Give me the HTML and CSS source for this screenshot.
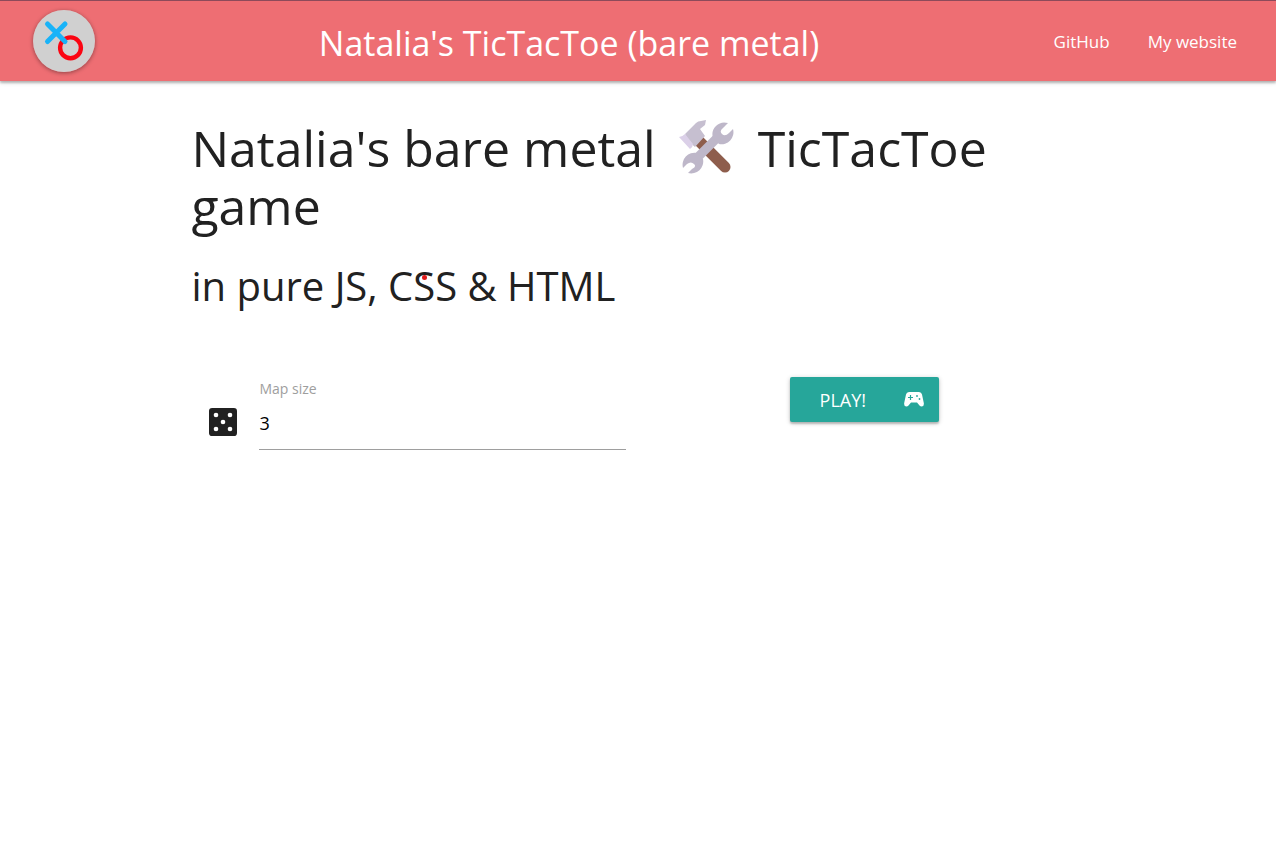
FILE: index.html
```html
<!DOCTYPE html>
<html lang="en">
<head>
<meta charset="utf-8">
<meta name="viewport" content="width=device-width, initial-scale=1">
<title>Natalia's TicTacToe (bare metal)</title>
<link rel="stylesheet" href="styles.css">
</head>
<body>
<header class="navbar">
  <a class="logo" href="#" aria-label="Home">
    <svg viewBox="0 0 62 62" aria-hidden="true">
      <circle cx="31" cy="31" r="31" fill="#d0d0d0"/>
      <circle cx="37.500" cy="37.800" r="10.400" fill="none" stroke="#fb0512" stroke-width="4.400"/>
      <path d="M14.500 14 32 31.500M32 14 14.500 31.500" fill="none" stroke="#19b3f8" stroke-width="5" stroke-linecap="round"/>
    </svg>
  </a>
  <div class="brand">Natalia's TicTacToe (bare metal)</div>
  <nav class="links">
    <a href="#">GitHub</a>
    <a href="#">My website</a>
  </nav>
</header>
<main class="container">
  <h1 class="title">Natalia's bare metal
    <svg class="tools" viewBox="0 0 56 56" role="img" aria-label="hammer and wrench">
      <path d="M20 21 46 47" stroke="#8e5d4c" stroke-width="11" stroke-linecap="round"/>
      <path d="M6 14 17 3Q19 1 22 1L27 0 26 5 21 9 26 16 16 27 9 21Z" fill="#c6bfd0"/>
      <path d="M0 17Q3 17 6 14L14 24Q14 27 11 29Z" fill="#dbd0e8"/>
      <path d="M14 42 41 15" stroke="#beb7c9" stroke-width="9"/>
      <path d="M49 3A12 12 0 0 0 34 18L40 24A12 12 0 0 0 54 9L50 13Q46 17 43 14T44 8Z" fill="#beb7c9"/>
      <path d="M18 33A12 12 0 0 0 4 48L8 44Q12 41 15 44T13 49L9 53A12 12 0 0 0 24 39Z" fill="#beb7c9"/>
    </svg>
    TicTacToe game</h1>
  <h2 class="subtitle">in pure JS, C<span class="marked">S</span>S &amp; HTML</h2>
  <form class="game-form" action="#">
    <div class="field-column">
      <svg class="dice" viewBox="3 3 18 18" aria-hidden="true">
        <rect x="3" y="3" width="18" height="18" rx="2" fill="#212121"/>
        <g fill="#fff"><circle cx="7.500" cy="7.500" r="1.500"/><circle cx="16.500" cy="7.500" r="1.500"/><circle cx="12" cy="12" r="1.500"/><circle cx="7.500" cy="16.500" r="1.500"/><circle cx="16.500" cy="16.500" r="1.500"/></g>
      </svg>
      <div class="field">
        <label for="map-size">Map size</label>
        <input id="map-size" type="text" inputmode="numeric" value="3">
      </div>
    </div>
    <div class="action-column">
      <button class="play" type="submit">PLAY!
        <svg viewBox="0 0 20 15" aria-hidden="true">
          <path d="M5 0H15Q17.500 0 18 2.500L19.800 11Q20.300 14.500 17.500 14.500 16.500 14.500 15.500 13.500L13 10.500H7L4.500 13.500Q3.500 14.500 2.500 14.500-.3 14.500.2 11L2 2.500Q2.500 0 5 0Z" fill="#fff"/>
          <path d="M6.500 3V8M4 5.500H9" stroke="#26a69a" stroke-width="1.200"/>
          <g fill="#26a69a"><circle cx="13" cy="4" r=".9"/><circle cx="15.500" cy="7" r=".9"/></g>
        </svg>
      </button>
    </div>
  </form>
</main>
</body>
</html>
```
FILE: styles.css
```css
* {
  box-sizing: border-box;
}

body {
  margin: 0;
  background: #fff;
  color: #212121;
  font-family: "Open Sans", "Noto Sans", sans-serif;
}

a {
  color: inherit;
  text-decoration: none;
}

.navbar {
  display: grid;
  grid-template-columns: 1fr auto 1fr;
  align-items: center;
  height: 81px;
  padding: 0 39px 0 33px;
  border-top: 1px solid #8d4a5a;
  background: #ee6e73;
  color: #fff;
  box-shadow: 0 2px 2px rgba(0, 0, 0, .2), 0 1px 5px rgba(0, 0, 0, .2);
}

.logo {
  width: 62px;
  height: 62px;
  border-radius: 50%;
  box-shadow: 0 1px 4px rgba(0, 0, 0, .4);
}

.logo svg {
  display: block;
}

.brand {
  padding: 4px 132px 0 0;
  font-size: 34px;
  line-height: 48px;
}

.links {
  display: flex;
  justify-content: flex-end;
  gap: 38px;
  font-size: 17px;
  white-space: nowrap;
}

.container {
  width: 70%;
  margin: 0 auto;
}

.title {
  margin: 38px 0 28px;
  font-size: 50px;
  font-weight: 400;
  line-height: 58px;
}

.tools {
  width: 56px;
  height: 56px;
  margin: 0 10px;
  vertical-align: -9px;
}

.subtitle {
  margin: 0 0 69px;
  font-size: 40px;
  font-weight: 400;
  line-height: 45px;
}

.marked {
  position: relative;
}

.marked::after {
  content: "";
  position: absolute;
  top: 17px;
  left: 9px;
  width: 5px;
  height: 5px;
  border-radius: 50%;
  background: #e01b1b;
}

.game-form {
  display: grid;
  grid-template-columns: 1fr 1fr;
  align-items: start;
}

.field-column {
  display: flex;
  align-items: center;
  gap: 22px;
  padding: 0 12px 0 18px;
}

.dice {
  flex: none;
  width: 28px;
  height: 28px;
  margin-top: 16px;
}

.field {
  display: flex;
  flex: 1;
  flex-direction: column;
}

.field label {
  color: #9e9e9e;
  font-size: 14px;
  line-height: 24px;
}

.field input {
  width: 100%;
  height: 49px;
  padding: 0 0 4px;
  border: 0;
  border-bottom: 1px solid #9e9e9e;
  outline: none;
  background: transparent;
  color: #000;
  font: inherit;
  font-size: 18px;
}

.action-column {
  display: flex;
  justify-content: center;
  padding-left: 6px;
}

.play {
  display: flex;
  align-items: center;
  gap: 38px;
  height: 45px;
  padding: 0 15px 0 30px;
  border: 0;
  border-radius: 2px;
  background: #26a69a;
  color: #fff;
  font: inherit;
  font-size: 18px;
  box-shadow: 0 2px 2px rgba(0, 0, 0, .2), 0 1px 5px rgba(0, 0, 0, .2);
}

.play svg {
  width: 20px;
  height: 15px;
}
```
